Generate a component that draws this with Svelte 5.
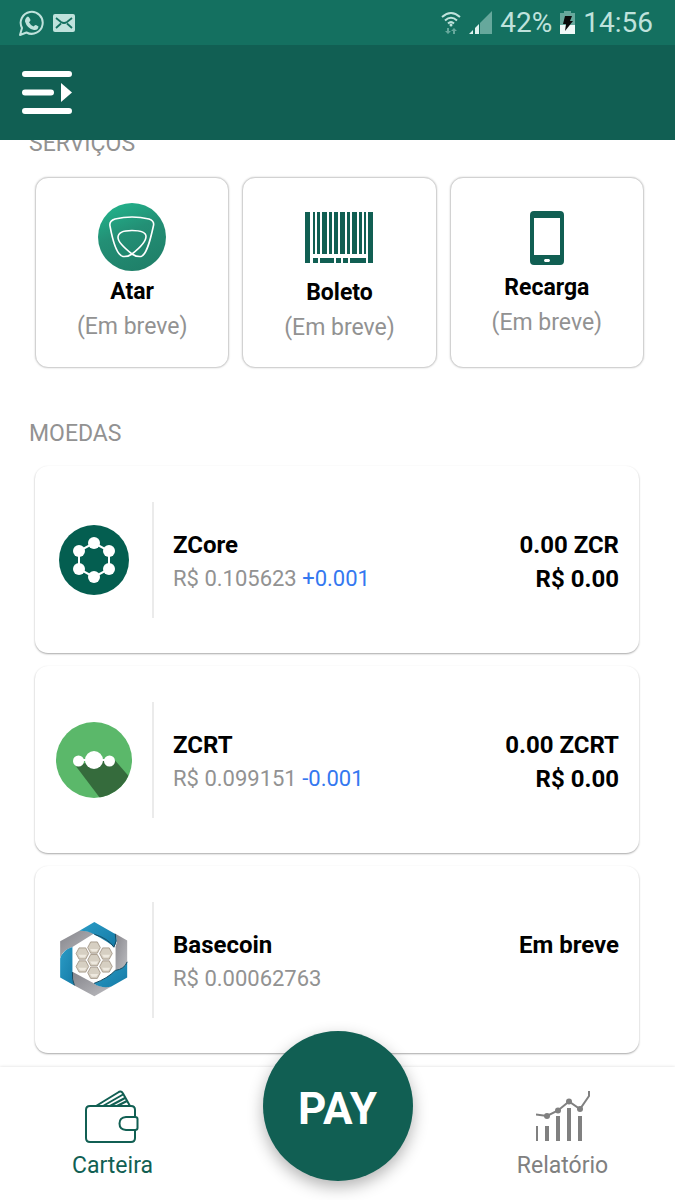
<script lang="ts">
	type Service = { id: string; name: string; note: string };
	type Coin = {
		id: string;
		name: string;
		price: string;
		change?: string;
		balance: string;
		value?: string;
	};

	const services: Service[] = [
		{ id: 'atar', name: 'Atar', note: '(Em breve)' },
		{ id: 'boleto', name: 'Boleto', note: '(Em breve)' },
		{ id: 'recarga', name: 'Recarga', note: '(Em breve)' }
	];

	const coins: Coin[] = [
		{ id: 'zcr', name: 'ZCore', price: 'R$ 0.105623', change: '+0.001', balance: '0.00 ZCR', value: 'R$ 0.00' },
		{ id: 'zcrt', name: 'ZCRT', price: 'R$ 0.099151', change: '-0.001', balance: '0.00 ZCRT', value: 'R$ 0.00' },
		{ id: 'base', name: 'Basecoin', price: 'R$ 0.00062763', balance: 'Em breve' }
	];

	// Barcode stripes: [x, width]
	const bars = [[8, 2], [12, 3], [17, 5], [24, 3], [29, 4], [35, 5], [42, 3], [47, 5], [54, 3], [59, 2]];

	// Honeycomb cell centres inside the Basecoin ring
	const cells = [[162, 139], [127, 157], [198, 157], [162, 177], [127, 196], [198, 196], [162, 215]];

	// ZCore nodes, clockwise from the top
	const nodes = [[35, 18], [50, 26], [50, 44], [35, 52], [20, 44], [20, 26]];
</script>

<div class="app">
	<div class="status-bar">
		<div class="status-group">
			<svg width="26" height="28" viewBox="0 0 26 28" aria-hidden="true">
				<path d="M2 26l2-7a11 11 0 1 1 4.500 4.500z" fill="none" stroke="#bfe2dc" stroke-width="2" stroke-linejoin="round" />
				<path d="M8 9q2-3 3.500 0l1 2q0 1-1.500 2.200 1.500 3 4.500 4.300 1.500-2 2.500-1.500l2.500 1.500q-.5 4-4.500 3.500-7-1.500-9-8.500-.2-2 1-3.500z" fill="#bfe2dc" />
			</svg>
			<svg width="22" height="18" viewBox="0 0 22 18" aria-hidden="true">
				<rect width="22" height="18" rx="2" fill="#bfe2dc" />
				<path d="M3 4l5 4q3 2 6 0l5-4M3 14l5-4.500M19 14l-5-4.500" fill="none" stroke="#147060" stroke-width="1.800" />
			</svg>
		</div>
		<div class="status-group right">
			<svg width="20" height="24" viewBox="0 0 20 24" aria-hidden="true">
				<g fill="none" stroke="#bfe2dc" stroke-width="2">
					<path d="M1 6q9-8 18 0M4 9.500q6-5.500 12 0M7 12.500q3-2.800 6 0" />
				</g>
				<circle cx="10" cy="14" r="1.500" fill="#bfe2dc" />
				<path d="M6 17v3H4l3 3 3-3H8v-3zM12 23v-3h-2l3-3 3 3h-2v3z" fill="#66a89c" />
			</svg>
			<svg width="23" height="23" viewBox="0 0 23 23" aria-hidden="true">
				<path d="M11 12L23 0V23H11z" fill="#66a89c" />
				<path d="M0 23l4-4v4zM6 17l4-4v10H6z" fill="#e0f2ef" />
			</svg>
			<span>42%</span>
			<svg width="15" height="23" viewBox="0 0 15 23" aria-hidden="true">
				<path d="M0 2h4V0h7v2h4v12H0z" fill="#66a89c" />
				<path d="M0 14h15v9H0z" fill="#f0faf8" />
				<path d="M5 5h7l-2 5h3L5 20l1-7H3z" fill="#0a0a0a" />
			</svg>
			<span>14:56</span>
		</div>
	</div>

	<header class="app-bar">
		<button type="button" class="menu-button" aria-label="Menu">
			<svg width="50" height="43" viewBox="0 0 50 43" aria-hidden="true">
				<path d="M3 3H47M3 21.500H29M3 40H47" stroke="#fff" stroke-width="6" stroke-linecap="round" />
				<path d="M39 12v19l11-9.500z" fill="#fff" />
			</svg>
		</button>
	</header>

	<main>
		<h2>SERVIÇOS</h2>
		<div class="services">
			{#each services as service (service.id)}
				<button type="button" class="service">
					{#if service.id === 'atar'}
						<svg width="68" height="69" viewBox="0 0 68 69" aria-hidden="true">
							<defs>
								<linearGradient id="atar-fill" x1="0.2" y1="0" x2="0.6" y2="1">
									<stop offset="0" stop-color="#22b48c" />
									<stop offset="0.45" stop-color="#238f75" />
									<stop offset="1" stop-color="#1f8069" />
								</linearGradient>
							</defs>
							<circle cx="34" cy="34" r="34" fill="url(#atar-fill)" />
							<path
								d="M34 51Q48 40 48 33.500C48 29 41 27.500 34 27.500S20 29 20 34.500Q20 40 34 51Q38 54 43 53.500C49 52 53 34 55.500 22.500Q56.500 18 51 16Q34 12 17 16Q11 18 12 23C14 34 18 52 25 53.500Q30 54 34 51z"
								fill="none"
								stroke="#fff"
								stroke-width="1.600"
							/>
						</svg>
					{:else if service.id === 'boleto'}
						<svg width="68" height="71" viewBox="0 -10 68 71" fill="#115f53" aria-hidden="true">
							<rect width="5" height="51" />
							<rect x="63" width="5" height="51" />
							{#each bars as [x, width]}
								<rect {x} {width} height="42" />
							{/each}
							<path d="M8 46h5v5H8zM15 46h14v5H15zM31 46h5v5h-5zM38 46h5v5h-5zM45 46h16v5H45z" />
						</svg>
					{:else}
						<svg width="34" height="60" viewBox="0 -3 34 60" aria-hidden="true">
							<path
								d="M4 0H30Q34 0 34 4V50Q34 54 30 54H4Q0 54 0 50V4Q0 0 4 0zM4 7V44H30V7zM15 48q-2 1.500 0 3h4q2-1.500 0-3z"
								fill="#115f53"
								fill-rule="evenodd"
							/>
						</svg>
					{/if}
					<strong>{service.name}</strong>
					<span>{service.note}</span>
				</button>
			{/each}
		</div>

		<h2>MOEDAS</h2>
		<ul class="coins">
			{#each coins as coin (coin.id)}
				<li class="coin">
					<div class="coin-icon">
						{#if coin.id === 'zcr'}
							<svg width="70" height="70" viewBox="0 0 70 70" aria-hidden="true">
								<circle cx="35" cy="35" r="35" fill="#045e50" />
								<polygon points={nodes.map((n) => n.join(',')).join(' ')} fill="none" stroke="#fff" stroke-width="2" />
								{#each nodes as [cx, cy]}
									<circle {cx} {cy} r="6" fill="#fff" />
								{/each}
							</svg>
						{:else if coin.id === 'zcrt'}
							<svg width="76" height="76" viewBox="0 0 76 76" aria-hidden="true">
								<clipPath id="zcrt-clip"><circle cx="38" cy="38" r="38" /></clipPath>
								<circle cx="38" cy="38" r="38" fill="#5bb86a" />
								<path d="M19 43L47 80H76V58L57 36z" fill="#356b3c" clip-path="url(#zcrt-clip)" />
								<path d="M22 38H54" stroke="#fff" stroke-width="2" />
								<circle cx="22.500" cy="39" r="5.500" fill="#fff" />
								<circle cx="38" cy="38" r="9" fill="#fff" />
								<circle cx="53.500" cy="39" r="5.500" fill="#fff" />
							</svg>
						{:else}
							<svg width="68" height="75" viewBox="60 62 204 226" aria-hidden="true">
								<defs>
									<linearGradient id="base-blue" x1="0" y1="0" x2="1" y2="1">
										<stop offset="0" stop-color="#2b9cc6" />
										<stop offset="1" stop-color="#147aa6" />
									</linearGradient>
									<linearGradient id="base-gray" x1="0" y1="0" x2="1" y2="1">
										<stop offset="0" stop-color="#85858b" />
										<stop offset="1" stop-color="#bcbcc0" />
									</linearGradient>
								</defs>
								<g fill="url(#base-gray)">
									<path d="M60 170V120L118 88Q150 88 162 97L97 137Q68 145 60 170z" />
									<path d="M224 96L262 118V184Q252 204 227 209V136Q236 118 224 96z" />
									<path d="M163 286L213 257Q180 262 160 246L97 212Q96 236 103 253z" />
								</g>
								<g fill="url(#base-blue)">
									<path d="M118 88L163 62L226 98Q236 118 222 138Q208 124 163 100Q148 88 118 88z" />
									<path d="M262 182V229L213 257Q182 262 162 247Q203 232 226 208Q254 204 262 182z" />
									<path d="M60 172Q67 146 97 137V213Q95 235 103 253L60 229z" />
								</g>
								<path
									d="M163 99Q205 112 222 138Q233 120 226 98M262 182Q254 204 226 208Q203 232 162 247M97 213Q95 235 103 253"
									fill="none"
									stroke="#174a60"
									stroke-width="3"
								/>
								{#each cells as [x, y]}
									<path d="M{x - 19} {y}l9-17h20l9 17-9 17h-20z" fill="#d6cfc2" stroke="#8c7d6a" stroke-width="2" />
									<path d="M{x - 12} {y + 4}l6 8h13l6-8z" fill="#eee9df" />
								{/each}
							</svg>
						{/if}
					</div>
					<div class="coin-info">
						<strong>{coin.name}</strong>
						<span class="price">
							{coin.price}
							{#if coin.change}<span class="change">{coin.change}</span>{/if}
						</span>
					</div>
					<div class="coin-balance">
						<strong>{coin.balance}</strong>
						{#if coin.value}<strong>{coin.value}</strong>{/if}
					</div>
				</li>
			{/each}
		</ul>
	</main>

	<nav>
		<a href="#carteira" class="tab active" aria-current="page">
			<svg width="54" height="54" viewBox="0 0 54 54" fill="none" stroke="#115f53" stroke-width="2" aria-hidden="true">
				<path d="M50 27V20Q50 16 46 16H5Q1 16 1 20V48Q1 52 5 52H46Q50 52 50 48V40" />
				<path d="M41 27H50Q52.500 27 52.500 29V38Q52.500 40 50 40H41Q34.500 39.500 34.500 33.500T41 27z" />
				<path d="M11 16L33 2.500Q36 0 38 3.500L45 16M18 16L38 4.500M25 16L40 8M32 16L42 11" />
			</svg>
			<span>Carteira</span>
		</a>
		<button type="button" class="pay">PAY</button>
		<a href="#relatorio" class="tab">
			<svg width="54" height="54" viewBox="0 0 54 54" fill="none" stroke="#808080" aria-hidden="true">
				<path d="M0 51V36M11 51V36M22 51V26M33 51V18M44 51V26" stroke-width="4" />
				<path d="M0 24.500L11 26 22 20.500 33 11.500 44 19 53 6V1" stroke-width="2" />
				<g fill="#808080" stroke="none">
					<circle cx="11" cy="26" r="3" />
					<circle cx="22" cy="20.500" r="3" />
					<circle cx="33" cy="11.500" r="3" />
					<circle cx="44" cy="19" r="3" />
				</g>
			</svg>
			<span>Relatório</span>
		</a>
	</nav>
</div>

<style>
	:global(body) {
		margin: 0;
		background: #fff;
	}

	.app {
		display: flex;
		flex-direction: column;
		height: 100vh;
		font-family: Roboto, 'Liberation Sans', sans-serif;
		font-size: 23px;
		color: #000;
	}

	button {
		border: none;
		padding: 0;
		font: inherit;
		color: inherit;
		cursor: pointer;
	}

	svg {
		display: block;
		flex: none;
	}

	strong {
		font-weight: 700;
	}

	/* Status bar */
	.status-bar {
		display: flex;
		justify-content: space-between;
		align-items: center;
		height: 45px;
		padding: 0 22px 0 18px;
		background: #147060;
		color: #bfe2dc;
		font-size: 28px;
	}

	.status-group {
		display: flex;
		align-items: center;
		gap: 9px;
	}

	.status-group.right {
		gap: 8px;
	}

	/* App bar */
	.app-bar {
		display: flex;
		align-items: center;
		height: 95px;
		padding: 0 22px;
		background: #115f53;
	}

	.menu-button {
		background: none;
	}

	/* Scrolled content */
	main {
		flex: 1;
		min-height: 0;
		overflow-x: hidden;
		overflow-y: auto;
	}

	h2 {
		margin: 52px 29px 18px;
		font-size: 23px;
		line-height: 28px;
		font-weight: 400;
		color: #929292;
	}

	/* The list opens slightly scrolled, under the app bar */
	h2:first-child {
		margin-top: -10px;
	}

	.services {
		display: grid;
		grid-template-columns: repeat(3, 1fr);
		gap: 13px;
		padding: 1px 31px 0 35px;
	}

	.service {
		display: flex;
		flex-direction: column;
		align-items: center;
		justify-content: center;
		height: 191px;
		padding-top: 2px;
		border: 1px solid #d2d2d2;
		border-radius: 13px;
		background: #fff;
		box-shadow: 0 0 2px rgba(0, 0, 0, 0.2);
		line-height: 35px;
	}

	.service svg {
		margin-bottom: 2px;
	}

	.service span {
		color: #929292;
	}

	.coins {
		display: flex;
		flex-direction: column;
		gap: 13px;
		margin: 0;
		padding: 0 36px 14px 35px;
		list-style: none;
	}

	.coin {
		display: flex;
		align-items: center;
		height: 187px;
		padding-right: 20px;
		border-radius: 13px;
		background: #fff;
		box-shadow: 0 1px 2px rgba(0, 0, 0, 0.35);
		line-height: 34px;
	}

	.coin strong {
		font-size: 24px;
	}

	.coin-icon {
		display: flex;
		align-items: center;
		justify-content: center;
		width: 117px;
		height: 116px;
		border-right: 2px solid #ebebeb;
	}

	.coin-info,
	.coin-balance {
		display: flex;
		flex-direction: column;
		min-height: 68px;
		padding-top: 4px;
	}

	.coin-info {
		flex: 1;
		padding-left: 19px;
	}

	.coin-balance {
		text-align: right;
	}

	.price {
		font-size: 22px;
		color: #929292;
	}

	.change {
		color: #3478f0;
	}

	/* Bottom navigation */
	nav {
		display: grid;
		grid-template-columns: repeat(3, 1fr);
		justify-items: center;
		height: 133px;
		background: #fff;
		box-shadow: 0 0 3px rgba(0, 0, 0, 0.15);
		position: relative;
	}

	.tab {
		display: flex;
		flex-direction: column;
		align-items: center;
		gap: 8px;
		padding-top: 23px;
		line-height: 28px;
		color: #808080;
		text-decoration: none;
	}

	.tab.active {
		color: #115f53;
	}

	.pay {
		width: 150px;
		height: 150px;
		margin-top: -36px;
		padding-top: 5px;
		border-radius: 50%;
		background: #115f53;
		color: #fff;
		font-size: 44px;
		font-weight: 700;
		box-shadow: 0 6px 16px rgba(0, 0, 0, 0.3);
	}
</style>
